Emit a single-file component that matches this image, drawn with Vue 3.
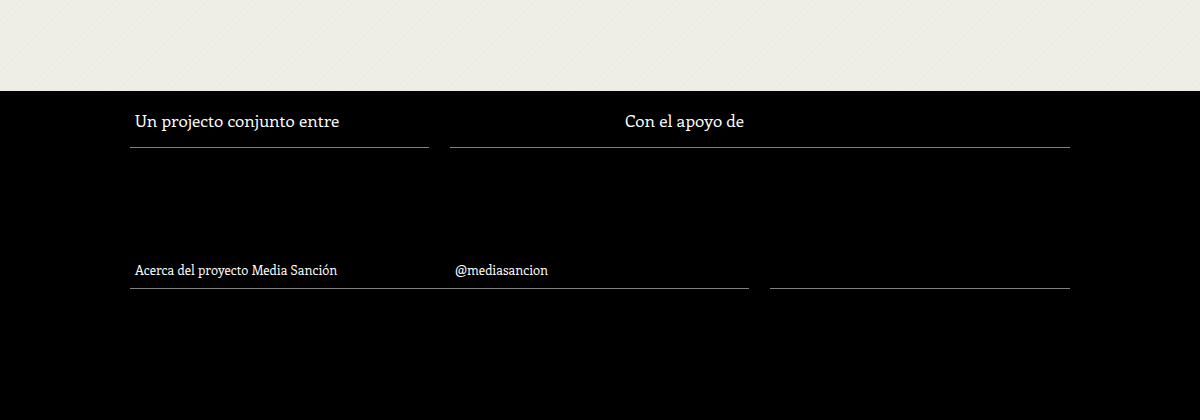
<script setup>
const partners = [
  { title: 'Un projecto conjunto entre', kind: 'joint' },
  { title: 'Con el apoyo de', kind: 'support' },
]
</script>

<template>
  <div class="page">
    <main class="content"></main>
    <footer class="footer">
      <div class="inner">
        <div class="row partners">
          <section v-for="p in partners" :key="p.kind" class="cell" :class="p.kind">
            <h2>{{ p.title }}</h2>
          </section>
        </div>
        <nav class="row links">
          <div class="cell pair">
            <a href="#acerca">Acerca del proyecto Media Sanción</a>
            <a href="#mediasancion">@mediasancion</a>
          </div>
          <div class="cell"></div>
        </nav>
      </div>
    </footer>
  </div>
</template>

<style>
body { background: #000; }
</style>

<style scoped>
.page {
  min-height: 100vh;
  background: #000;
  color: #fff;
  font-family: Enriqueta, Arvo, "DejaVu Serif", "Liberation Serif", serif;
}
.content {
  min-height: 91px;
  background: repeating-linear-gradient(135deg, #efeee7 0 2px, #eeede5 2px 4px);
}
.inner {
  max-width: 940px;
  margin: 0 auto;
}
.row {
  display: grid;
  column-gap: 21px;
}
.cell {
  border-bottom: 1px solid #808080;
}
.partners {
  grid-template-columns: 299fr 620fr;
}
.partners .cell {
  padding: 19px 5px 17px;
}
h2 {
  margin: 0;
  font-size: 17px;
  line-height: 20px;
  font-weight: 400;
}
.support h2 {
  padding-left: 170px;
}
.links {
  grid-template-columns: 619fr 300fr;
  margin-top: 112px;
}
.pair {
  display: grid;
  grid-template-columns: 320px 1fr;
  padding: 0 5px 8px;
}
a {
  color: inherit;
  font-size: 13px;
  line-height: 20px;
  text-decoration: none;
}
</style>
